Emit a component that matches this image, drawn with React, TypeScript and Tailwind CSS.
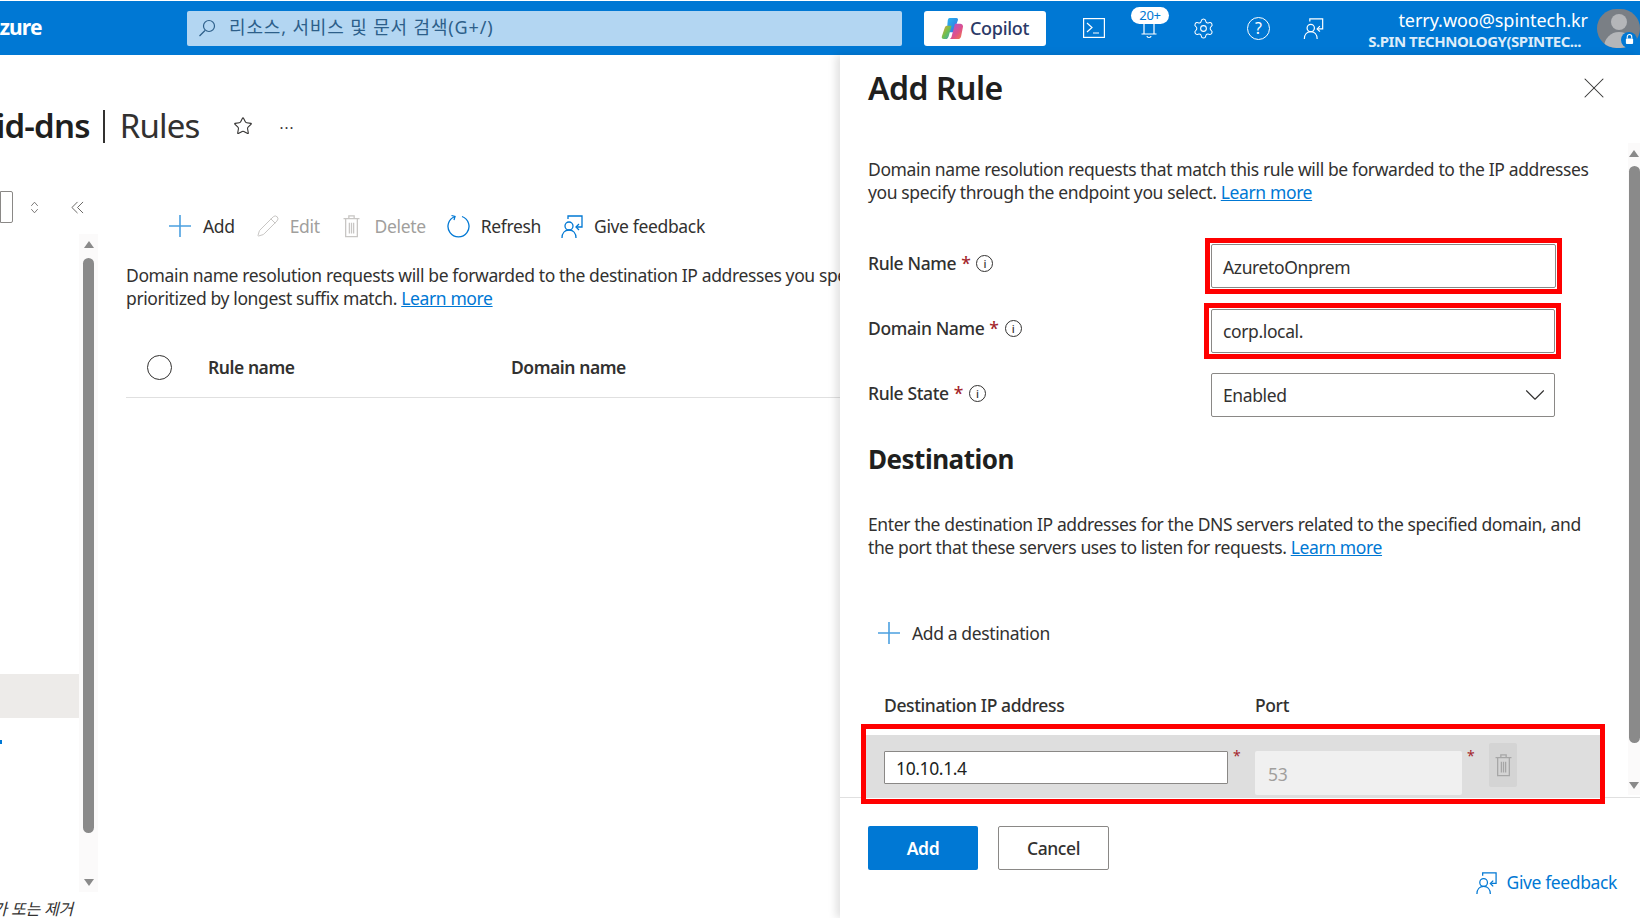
import React from 'react'
import { Settings, Star, X, ChevronDown, Pencil } from 'lucide-react'

const FeedbackIcon = ({ className }: { className: string }) => (
  <svg viewBox="0 0 24 24" fill="none" stroke="currentColor" strokeWidth="1.3" className={className}>
    <circle cx="9" cy="12" r="4" />
    <path d="M2 24c0-5 3-8 7-8s7 3 7 8" />
    <path d="M8 5V2h14v11h-5" />
    <path d="M19 10l-3 3 3 3" />
  </svg>
)

const PlusIcon = ({ className }: { className: string }) => (
  <svg viewBox="0 0 24 24" fill="none" stroke="#4ba0e0" strokeWidth="1.6" className={className}>
    <path d="M12 1v22M1 12h22" />
  </svg>
)

const TrashIcon = ({ className }: { className: string }) => (
  <svg viewBox="0 0 16 22" fill="none" stroke="currentColor" strokeWidth="1.2" className={className}>
    <path d="M0.5 4h15M5.5 4V1.5h5V4M2.5 4v17h11V4M6 8v10M8 8v10M10 8v10" />
  </svg>
)

const InfoIcon = () => (
  <span className="ml-[6px] flex h-[17px] w-[17px] items-center justify-center rounded-full border border-[#323130] text-[11px] leading-none text-[#323130]">i</span>
)

const Req = () => <span className="ml-[5px] text-[#a4262c]">*</span>

const CopilotLogo = () => (
  <svg viewBox="0 0 24 24" className="h-[23px] w-[23px]">
    <defs>
      <linearGradient id="cpA" x1="0" y1="0" x2="1" y2="1">
        <stop offset="0" stopColor="#2bb7f0" />
        <stop offset="1" stopColor="#2f6fe0" />
      </linearGradient>
      <linearGradient id="cpB" x1="0" y1="0" x2="1" y2="1">
        <stop offset="0" stopColor="#f0a030" />
        <stop offset="0.5" stopColor="#70c050" />
        <stop offset="1" stopColor="#30a0d0" />
      </linearGradient>
      <linearGradient id="cpC" x1="0" y1="0" x2="1" y2="1">
        <stop offset="0" stopColor="#9a5ae0" />
        <stop offset="0.6" stopColor="#e0508a" />
        <stop offset="1" stopColor="#f08040" />
      </linearGradient>
    </defs>
    <path d="M9 1h7c1.5 0 2 1.2 1.6 2.4L13 16H6L7 4c.2-1.8.8-3 2-3z" fill="url(#cpA)" />
    <path d="M6 9h5l-3 11c-.4 1.6-1.400 3-3 3H3c-1.800 0-2.700-1.500-2-3.200L4 11c.4-1.200 1-2 2-2z" fill="url(#cpB)" />
    <path d="M15 7h5c1.800 0 3 1.300 3 3l-2 10c-.4 2-1.800 3-3.500 3H8c1.500 0 2.500-1 3-2.500L14 9c.2-1 .5-2 1-2z" fill="url(#cpC)" />
  </svg>
)

const Scrollbar = ({ stripClass, thumbClass }: { stripClass: string; thumbClass: string }) => (
  <div className={stripClass}>
    <div className="flex h-[20px] shrink-0 items-center justify-center text-[#8a8a8a]">
      <div className="h-0 w-0 border-x-[5px] border-b-[7px] border-x-transparent border-b-[#8a8a8a]" />
    </div>
    <div className={thumbClass} />
    <div className="flex-1" />
    <div className="flex h-[20px] shrink-0 items-center justify-center">
      <div className="h-0 w-0 border-x-[5px] border-t-[7px] border-x-transparent border-t-[#8a8a8a]" />
    </div>
  </div>
)

const TopBar = () => (
  <div className="flex h-[54px] items-center bg-[#0078d4] text-white">
    <div className="w-[187px] shrink-0 overflow-hidden">
      <div className="ml-[-14px] text-[21px] font-bold tracking-[-0.9px]">Azure</div>
    </div>
    <div className="flex h-[35px] w-[715px] shrink-0 items-center rounded-[2px] bg-[#b3d6f2] pl-[11px] text-[#2d5f8a]">
      <svg viewBox="0 0 18 18" fill="none" stroke="currentColor" strokeWidth="1.2" className="h-[18px] w-[18px]">
        <circle cx="11" cy="7" r="5.500" />
        <path d="M7 11.500L1.500 17" />
      </svg>
      <span className="ml-[13px] pb-[2px] text-[18px] tracking-[0.85px]">리소스, 서비스 및 문서 검색(G+/)</span>
    </div>
    <div className="ml-[22px] flex h-[35px] w-[122px] shrink-0 items-center justify-center gap-[6px] rounded-[3px] bg-white text-[18px] font-medium tracking-[-0.3px] text-[#2b3a67]">
      <CopilotLogo />
      Copilot
    </div>
    <div className="ml-[20px] flex items-center">
      <div className="flex w-[55px] justify-center">
        <svg viewBox="0 0 22 20" fill="none" stroke="currentColor" strokeWidth="1.2" className="h-[20px] w-[22px]">
          <rect x="0.600" y="0.600" width="20.800" height="18.800" />
          <path d="M4 5l5 4.500L4 14M10 15h6" />
        </svg>
      </div>
      <div className="relative flex h-[46px] w-[55px] items-end justify-center pb-[12px]">
        <svg viewBox="0 0 16 16" fill="none" stroke="currentColor" strokeWidth="1.200" className="h-[16px] w-[16px]">
          <path d="M3 0v11H0.500h15H13V0M6 13c0 2 4 2 4 0" />
        </svg>
        <div className="absolute left-[10px] top-[2px] flex h-[17px] w-[38px] items-center justify-center rounded-full bg-white text-[13px] tracking-[-0.3px] text-[#0078d4]">20+</div>
      </div>
      <div className="flex w-[55px] justify-center">
        <Settings size={23} strokeWidth={1.1} />
      </div>
      <div className="flex w-[55px] justify-center">
        <div className="flex h-[23px] w-[23px] items-center justify-center rounded-full border-[1.3px] border-white text-[16px] leading-none">?</div>
      </div>
      <div className="flex w-[55px] justify-center">
        <FeedbackIcon className="h-[22px] w-[23px]" />
      </div>
    </div>
    <div className="flex-1 whitespace-nowrap pt-[3px] text-right leading-none">
      <div className="text-[18px] leading-[22px] tracking-[-0.05px]">terry.woo@spintech.kr</div>
      <div className="pr-[7px] text-[15px] font-bold leading-[20px] tracking-[-0.5px] text-[#dcecf9]">S.PIN TECHNOLOGY(SPINTEC...</div>
    </div>
    <div className="relative ml-[9px] h-[39px] w-[43px] shrink-0">
      <div className="h-[39px] w-[43px] overflow-hidden rounded-full bg-[#7a7f85]">
        <div className="mx-auto mt-[5px] h-[16px] w-[16px] rounded-full bg-[#b4b6b9]" />
        <div className="mx-auto mt-[2px] h-[20px] w-[30px] rounded-t-full bg-[#b4b6b9]" />
      </div>
      <div className="absolute bottom-0 right-[3px] flex h-[16px] w-[16px] items-center justify-center rounded-full bg-[#0078d4]">
        <svg viewBox="0 0 10 12" fill="white" stroke="white" className="h-[11px] w-[9px]">
          <path d="M2.500 5V3a2.500 2.500 0 0 1 5 0v2" fill="none" strokeWidth="1.200" />
          <rect x="1" y="5" width="8" height="6" rx="1" strokeWidth="0" />
        </svg>
      </div>
    </div>
  </div>
)

const LeftPane = () => (
  <div className="h-[863px] w-[840px] shrink-0 overflow-hidden text-[#323130]">
    <div className="mt-[48px] flex h-[46px] items-center">
      <span className="ml-[-75px] text-[33px] font-semibold tracking-[-0.8px] text-[#201f1e]">hybrid-dns</span>
      <span className="ml-[13px] h-[33px] w-[2px] bg-[#323130]" />
      <span className="ml-[15px] text-[33px] tracking-[-0.8px]">Rules</span>
      <Star size={20} strokeWidth={1.3} className="ml-[33px]" />
      <span className="ml-[27px] mb-[6px] text-[15px] leading-none tracking-[1px]">...</span>
    </div>
    <div className="flex">
      <div className="w-[126px] shrink-0">
        <div className="mt-[42px] flex h-[32px] items-center">
          <div className="h-[32px] w-[13px] rounded-r-[2px] border border-[#8a8886]" />
          <svg viewBox="0 0 10 16" fill="none" stroke="#605e5c" strokeWidth="1" className="ml-[17px] h-[13px] w-[9px]">
            <path d="M1 6l4-4.500L9 6M1 10l4 4.500L9 10" />
          </svg>
          <svg viewBox="0 0 14 14" fill="none" stroke="#605e5c" strokeWidth="1" className="ml-[32px] h-[13px] w-[13px]">
            <path d="M7 1L1 7l6 6M13 1L7 7l6 6" />
          </svg>
        </div>
        <div className="mt-[11px] flex h-[660px]">
          <div className="w-[79px] shrink-0">
            <div className="mt-[440px] h-[44px] bg-[#edebe9]" />
            <div className="mt-[22px] h-[4px] w-[2px] bg-[#0078d4]" />
          </div>
          <Scrollbar stripClass="flex h-[658px] w-[19px] flex-col bg-[#fbfafa]" thumbClass="mx-auto mt-[4px] h-[575px] w-[11px] shrink-0 rounded-full bg-[#8a8a8a]" />
        </div>
        <div className="ml-[-22px] mt-[5px] whitespace-nowrap text-[16px] italic leading-[20px] tracking-[-0.2px]">추가 또는 제거</div>
      </div>
      <div className="w-[714px] shrink-0">
        <div className="mt-[59px] flex h-[36px] items-center text-[17.5px] tracking-[-0.35px]">
          <PlusIcon className="ml-[42px] h-[24px] w-[24px]" />
          <span className="ml-[11px]">Add</span>
          <Pencil size={24} strokeWidth={1} className="ml-[21px] text-[#c8c6c4]" />
          <span className="ml-[10px] text-[#a19f9d]">Edit</span>
          <TrashIcon className="ml-[23px] h-[24px] w-[17px] text-[#c8c6c4]" />
          <span className="ml-[15px] text-[#a19f9d]">Delete</span>
          <svg viewBox="0 0 24 24" fill="none" stroke="#0078d4" strokeWidth="1.300" className="ml-[21px] h-[24px] w-[24px]">
            <path d="M15 2.500a10.500 10.500 0 1 1-7 0" />
            <path d="M4.500 1.500l3.500 1-1 3.500" />
          </svg>
          <span className="ml-[10px]">Refresh</span>
          <FeedbackIcon className="ml-[19px] h-[24px] w-[24px] text-[#0078d4]" />
          <span className="ml-[10px]">Give feedback</span>
        </div>
        <div className="mt-[20px] w-[900px] text-[17.5px] leading-[23px] tracking-[-0.38px]">
          <div>Domain name resolution requests will be forwarded to the destination IP addresses you specify through</div>
          <div>prioritized by longest suffix match. <span className="text-[#0078d4] underline">Learn more</span></div>
        </div>
        <div className="mt-[28px] flex h-[60px] items-center border-b border-[#e0e0e0] text-[17.5px] font-semibold tracking-[-0.45px]">
          <div className="ml-[21px] h-[25px] w-[25px] rounded-full border-[1.3px] border-[#323130]" />
          <div className="ml-[36px] w-[303px]">Rule name</div>
          <div>Domain name</div>
        </div>
      </div>
    </div>
  </div>
)

const RedBox = ({ className, children }: { className: string; children: React.ReactNode }) => (
  <div className={`border-[5px] border-[#ff0000] p-px ${className}`}>{children}</div>
)

const RulePanel = () => (
  <div className="relative z-10 flex h-[863px] w-[800px] shrink-0 flex-col bg-white text-[17.5px] tracking-[-0.38px] text-[#323130] shadow-[-4px_0_8px_rgba(0,0,0,0.12)]">
    <div className="flex h-[742px]">
      <div className="w-[788px] shrink-0 pl-[28px]">
        <div className="mt-[13px] flex h-[40px] items-center justify-between pr-[16px]">
          <span className="text-[32px] font-semibold tracking-[-0.5px] text-[#201f1e]">Add Rule</span>
          <X size={36} strokeWidth={0.7} />
        </div>
        <div className="mt-[50px] w-[740px] leading-[23px]">
          Domain name resolution requests that match this rule will be forwarded to the IP addresses you specify through the endpoint you select. <span className="text-[#0078d4] underline">Learn more</span>
        </div>
        <div className="mt-[34px] flex h-[56px] items-center">
          <div className="flex w-[337px] items-center pb-[5px] font-medium"><span>Rule Name</span><Req /><InfoIcon /></div>
          <RedBox className="h-[56px] w-[357px]">
            <div className="flex h-[44px] items-center rounded-[2px] border border-[#8a8886] pl-[11px] pt-[2px]">AzuretoOnprem</div>
          </RedBox>
        </div>
        <div className="mt-[9px] flex h-[56px] items-center">
          <div className="flex w-[336px] items-center pb-[5px] font-medium"><span>Domain Name</span><Req /><InfoIcon /></div>
          <RedBox className="h-[56px] w-[357px]">
            <div className="ml-px flex h-[44px] items-center rounded-[2px] border border-[#8a8886] pl-[11px]">corp.local.</div>
          </RedBox>
        </div>
        <div className="mt-[14px] flex h-[44px] items-center">
          <div className="flex w-[343px] items-center pb-[4px] font-medium"><span>Rule State</span><Req /><InfoIcon /></div>
          <div className="flex h-[44px] w-[344px] items-center justify-between rounded-[2px] border border-[#8a8886] pl-[11px] pr-[2px]">
            Enabled
            <ChevronDown size={34} strokeWidth={0.8} />
          </div>
        </div>
        <div className="mt-[25px] h-[34px] text-[26px] font-bold leading-[34px] tracking-[-0.5px] text-[#201f1e]">Destination</div>
        <div className="mt-[37px] w-[740px] leading-[23px]">
          Enter the destination IP addresses for the DNS servers related to the specified domain, and the port that these servers uses to listen for requests. <span className="text-[#0078d4] underline">Learn more</span>
        </div>
        <div className="mt-[59px] flex h-[30px] items-center">
          <PlusIcon className="ml-[9px] h-[24px] w-[24px]" />
          <span className="ml-[11px]">Add a destination</span>
        </div>
        <div className="mt-[45px] flex h-[24px] items-center font-medium">
          <span className="ml-[16px] w-[371px]">Destination IP address</span>
          <span>Port</span>
        </div>
        <div className="relative z-10 ml-[-7px] mt-[7px] h-[80px] w-[744px] border-[5px] border-[#ff0000] bg-white pt-[6px]">
          <div className="flex h-[63px] items-start bg-[#dedede] pl-[18px]">
            <div className="mt-[16px] flex h-[33px] w-[344px] items-center rounded-[1px] border border-[#8a8886] bg-white pl-[11px] pt-[2px] text-[#201f1e]">10.10.1.4</div>
            <span className="ml-[5px] mt-[14px] w-[22px] text-[14px] leading-none text-[#a4262c]">*</span>
            <div className="mt-[16px] flex h-[44px] w-[207px] items-center rounded-[2px] bg-[#f0f0f0] pl-[13px] pt-[3px] text-[#a19f9d]">53</div>
            <span className="ml-[5px] mt-[14px] w-[22px] text-[14px] leading-none text-[#a4262c]">*</span>
            <div className="mt-[8px] flex h-[44px] w-[28px] items-center justify-center rounded-[2px] bg-[#d4d4d4] text-[#a6a6a6]">
              <TrashIcon className="h-[24px] w-[17px]" />
            </div>
          </div>
        </div>
      </div>
      <div className="w-[12px] shrink-0 pt-[88px]">
        <Scrollbar stripClass="flex h-[652px] w-[12px] flex-col bg-[#fbfafa]" thumbClass="mx-auto mt-[3px] h-[577px] w-[11px] shrink-0 rounded-full bg-[#8a8a8a]" />
      </div>
    </div>
    <div className="flex-1 border-t border-[#e0e0e0] pl-[28px]">
      <div className="mt-[28px] flex gap-[20px]">
        <div className="flex h-[44px] w-[110px] items-center justify-center rounded-[2px] bg-[#0078d4] font-semibold text-white">Add</div>
        <div className="flex h-[44px] w-[111px] items-center justify-center rounded-[2px] border border-[#8a8886] font-medium">Cancel</div>
      </div>
      <div className="flex h-[24px] items-center justify-end pr-[23px] text-[#0078d4]">
        <FeedbackIcon className="mr-[9px] h-[23px] w-[23px]" />
        Give feedback
      </div>
    </div>
  </div>
)

export default function App() {
  return (
    <div className="h-[918px] w-[1640px] overflow-hidden bg-white pt-px [font-family:'Noto_Sans','Noto_Sans_CJK_KR',sans-serif]">
      <TopBar />
      <div className="flex">
        <LeftPane />
        <RulePanel />
      </div>
    </div>
  )
}
